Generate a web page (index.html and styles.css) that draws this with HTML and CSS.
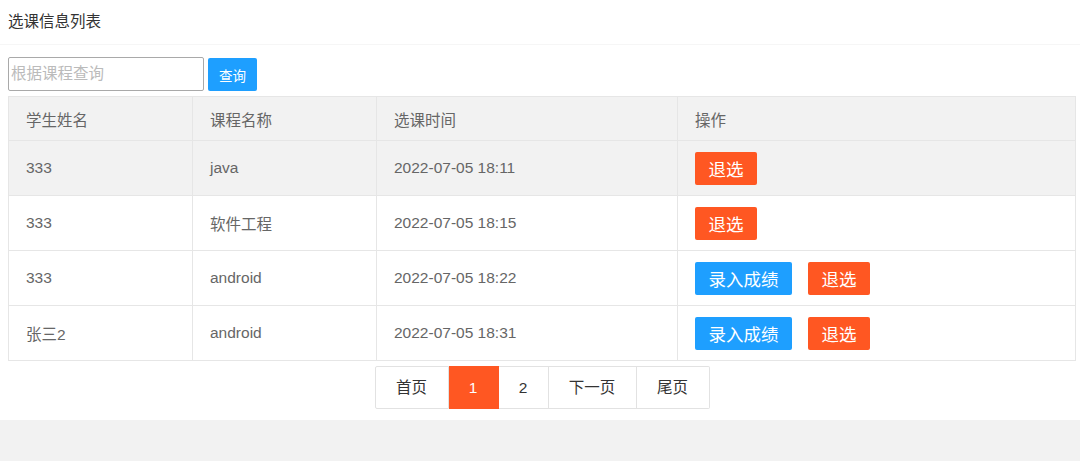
FILE: index.html
```html
<!DOCTYPE html>
<html lang="zh-CN">
<head>
    <meta charset="UTF-8">
    <title>选课信息列表</title>
    <link rel="stylesheet" href="styles.css">
</head>
<body>
    <div class="card">
        <div class="card-header">选课信息列表</div>
        <div class="card-body">
            <div class="search-bar">
                <input class="search-input" type="text" placeholder="根据课程查询">
                <button class="btn btn-blue btn-search">查询</button>
            </div>
            <table class="data-table">
                <colgroup>
                    <col class="col-name">
                    <col class="col-course">
                    <col class="col-time">
                    <col>
                </colgroup>
                <thead>
                    <tr>
                        <th>学生姓名</th>
                        <th>课程名称</th>
                        <th>选课时间</th>
                        <th>操作</th>
                    </tr>
                </thead>
                <tbody>
                    <tr class="hover">
                        <td>333</td>
                        <td>java</td>
                        <td>2022-07-05 18:11</td>
                        <td><button class="btn btn-red">退选</button></td>
                    </tr>
                    <tr>
                        <td>333</td>
                        <td>软件工程</td>
                        <td>2022-07-05 18:15</td>
                        <td><button class="btn btn-red">退选</button></td>
                    </tr>
                    <tr>
                        <td>333</td>
                        <td>android</td>
                        <td>2022-07-05 18:22</td>
                        <td><button class="btn btn-blue">录入成绩</button><button class="btn btn-red">退选</button></td>
                    </tr>
                    <tr>
                        <td>张三2</td>
                        <td>android</td>
                        <td>2022-07-05 18:31</td>
                        <td><button class="btn btn-blue">录入成绩</button><button class="btn btn-red">退选</button></td>
                    </tr>
                </tbody>
            </table>
            <div class="pager">
                <a class="page-first">首页</a>
                <a class="page-num current">1</a>
                <a class="page-num">2</a>
                <a class="page-next">下一页</a>
                <a class="page-last">尾页</a>
            </div>
        </div>
    </div>
</body>
</html>
```

FILE: styles.css
```css
body {
    margin: 0;
    background: #f2f2f2;
    font-family: "Liberation Sans", "Noto Sans CJK SC", sans-serif;
    color: #666;
}

.card {
    background: #fff;
    height: 420px;
}

.card-header {
    height: 44px;
    line-height: 44px;
    padding-left: 8px;
    font-size: 15.5px;
    color: #333;
    border-bottom: 1px solid #f6f6f6;
}

.card-body {
    padding: 12px 4px 0 8px;
}

.search-bar {
    display: flex;
    align-items: center;
    gap: 4px;
    height: 34px;
}

.search-input {
    box-sizing: border-box;
    width: 196px;
    height: 34px;
    margin: 0;
    padding: 0 2px;
    border: 1px solid #a9a9a9;
    border-radius: 2px;
    font-family: inherit;
    font-size: 15.5px;
    outline: none;
}

.search-input::placeholder {
    color: #bbb;
}

.btn {
    border: none;
    border-radius: 2px;
    color: #fff;
    font-family: inherit;
    cursor: pointer;
    height: 33px;
    padding: 0 13.5px;
    font-size: 17.5px;
}

.btn-blue {
    background: #1e9fff;
}

.btn-red {
    background: #ff5722;
}

.btn-search {
    width: 49px;
    padding: 0;
    font-size: 13.5px;
    margin-top: 1px;
}

.data-table {
    width: 1068px;
    margin-top: 5px;
    border-collapse: collapse;
    font-size: 15.5px;
}

.col-name,
.col-course {
    width: 184px;
}

.col-time {
    width: 301px;
}

.data-table th,
.data-table td {
    border: 1px solid #e6e6e6;
    padding: 0 0 0 17px;
    text-align: left;
    font-weight: normal;
    color: #666;
}

.data-table th {
    height: 43px;
    background: #f2f2f2;
}

.data-table td {
    height: 54px;
}

.data-table tr.hover td {
    background: #f2f2f2;
}

.data-table td .btn + .btn {
    margin-left: 16px;
}

.pager {
    display: flex;
    justify-content: center;
    margin-top: 5px;
}

.pager a {
    box-sizing: border-box;
    height: 43px;
    line-height: 41px;
    text-align: center;
    font-size: 15.5px;
    color: #333;
    border: 1px solid #e2e2e2;
    border-left: none;
    background: #fff;
}

.pager .page-first {
    width: 74px;
    border-left: 1px solid #e2e2e2;
    border-radius: 2px 0 0 2px;
}

.pager .page-num {
    width: 50px;
}

.pager .page-next {
    width: 88px;
}

.pager .page-last {
    width: 73px;
    border-radius: 0 2px 2px 0;
}

.pager .current {
    background: #ff5722;
    border-color: #ff5722;
    color: #fff;
}
```
